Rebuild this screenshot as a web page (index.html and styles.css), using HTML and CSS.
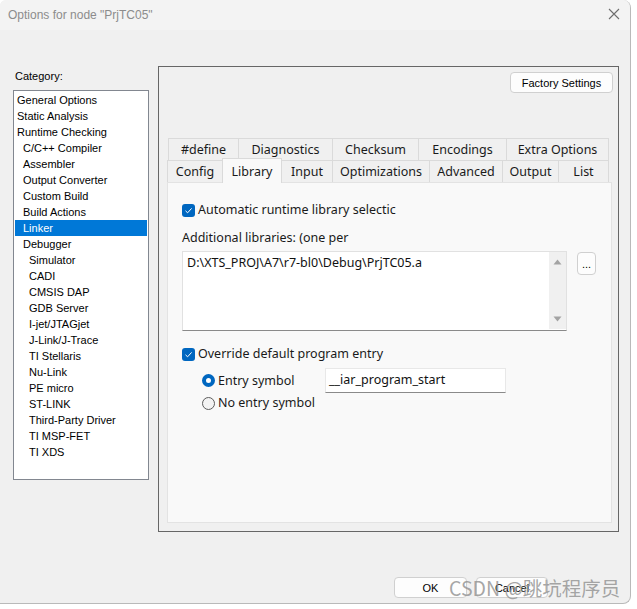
FILE: index.html
```html
<!DOCTYPE html>
<html>
<head>
<meta charset="utf-8">
<title>Options for node "PrjTC05"</title>
<link rel="stylesheet" href="styles.css">
</head>
<body>
<div class="window">
  <div class="titlebar">
    <span class="title">Options for node "PrjTC05"</span>
    <svg class="close" width="12" height="12" viewBox="0 0 12 12"><path d="M1 1L11 11M11 1L1 11" stroke="#6e6e6e" stroke-width="1.1" fill="none"/></svg>
  </div>
  <div class="main">
    <div class="category">
      <div class="cat-label">Category:</div>
      <ul class="cat-list">
        <li class="l0">General Options</li>
        <li class="l0">Static Analysis</li>
        <li class="l0">Runtime Checking</li>
        <li class="l1">C/C++ Compiler</li>
        <li class="l1">Assembler</li>
        <li class="l1">Output Converter</li>
        <li class="l1">Custom Build</li>
        <li class="l1">Build Actions</li>
        <li class="l1 selected">Linker</li>
        <li class="l1">Debugger</li>
        <li class="l2">Simulator</li>
        <li class="l2">CADI</li>
        <li class="l2">CMSIS DAP</li>
        <li class="l2">GDB Server</li>
        <li class="l2">I-jet/JTAGjet</li>
        <li class="l2">J-Link/J-Trace</li>
        <li class="l2">TI Stellaris</li>
        <li class="l2">Nu-Link</li>
        <li class="l2">PE micro</li>
        <li class="l2">ST-LINK</li>
        <li class="l2">Third-Party Driver</li>
        <li class="l2">TI MSP-FET</li>
        <li class="l2">TI XDS</li>
      </ul>
    </div>
    <div class="frame">
      <div class="frame-head"><button class="btn factory">Factory Settings</button></div>
      <div class="tabs">
        <div class="tabrow back">
          <div class="tab t-define">#define</div>
          <div class="tab t-diag">Diagnostics</div>
          <div class="tab t-check">Checksum</div>
          <div class="tab t-enc">Encodings</div>
          <div class="tab t-extra">Extra Options</div>
        </div>
        <div class="tabrow front">
          <div class="tab t-config">Config</div>
          <div class="tab t-lib active">Library</div>
          <div class="tab t-input">Input</div>
          <div class="tab t-opt">Optimizations</div>
          <div class="tab t-adv">Advanced</div>
          <div class="tab t-out">Output</div>
          <div class="tab t-list">List</div>
        </div>
      </div>
      <div class="page">
        <div class="row check-row">
          <span class="checkbox checked"><svg width="13" height="13" viewBox="0 0 13 13"><path d="M3.5 6.8L5.6 8.8L9.6 4.4" stroke="#fff" stroke-width="1" fill="none"/></svg></span>
          <span class="label">Automatic runtime library selectic</span>
        </div>
        <div class="row text-row">
          <span class="label">Additional libraries: (one per</span>
        </div>
        <div class="lib-row">
          <div class="textarea">
            <div class="ta-text">D:\XTS_PROJ\A7\r7-bl0\Debug\PrjTC05.a</div>
            <div class="scrollbar">
              <svg width="17" height="77" viewBox="0 0 17 77"><path d="M4.5 12.5L8.5 7.5L12.5 12.5Z" fill="#a3a3a3"/><path d="M4.5 64.5L8.5 69.5L12.5 64.5Z" fill="#a3a3a3"/></svg>
            </div>
          </div>
          <button class="btn dots">...</button>
        </div>
        <div class="row check-row cb2">
          <span class="checkbox checked"><svg width="13" height="13" viewBox="0 0 13 13"><path d="M3.5 6.8L5.6 8.8L9.6 4.4" stroke="#fff" stroke-width="1" fill="none"/></svg></span>
          <span class="label">Override default program entry</span>
        </div>
        <div class="radio-row r1">
          <span class="radio-label"><span class="radio on"></span><span class="label">Entry symbol</span></span>
          <div class="field">__iar_program_start</div>
        </div>
        <div class="radio-row r2">
          <span class="radio-label"><span class="radio"></span><span class="label">No entry symbol</span></span>
        </div>
      </div>
    </div>
  </div>
  <div class="footer">
    <button class="btn dlg ok">OK</button>
    <button class="btn dlg cancel">Cancel</button>
  </div>
  <div class="watermark">CSDN @跳坑程序员</div>
</div>
</body>
</html>
```
FILE: styles.css
```css
* { box-sizing: border-box; }
html, body { margin: 0; padding: 0; }
body {
  width: 637px;
  height: 609px;
  overflow: hidden;
  background: #ffffff;
  font-family: "Liberation Sans", Arial, sans-serif;
}
.window {
  position: relative;
  width: 631px;
  height: 604px;
  background: #f0f0f0;
  border-right: 1px solid #b9b9b9;
  border-bottom: 1px solid #b9b9b9;
  border-radius: 6px 8px 8px 0;
  overflow: hidden;
}
.titlebar {
  height: 30px;
  background: #f3f3f3;
  display: flex;
  align-items: center;
  justify-content: space-between;
  padding: 0 10px 0 8px;
}
.title {
  font-size: 12px;
  color: #8c8c8c;
  font-family: "Liberation Sans", Arial, sans-serif;
}
.close { margin-top: -2px; }

.main {
  display: flex;
  padding: 36px 0 0 13px;
}
.category { width: 136px; }
.cat-label {
  height: 20px;
  line-height: 20px;
  margin-bottom: 4px;
  font-size: 11px;
  padding-left: 2px;
  color: #000;
}
.cat-list {
  list-style: none;
  margin: 0;
  padding: 1px;
  width: 136px;
  height: 390px;
  background: #fff;
  border: 1px solid #828790;
}
.cat-list li {
  height: 16px;
  line-height: 16px;
  font-size: 11px;
  color: #000;
  white-space: nowrap;
}
.cat-list .l0 { padding-left: 2px; }
.cat-list .l1 { padding-left: 8px; }
.cat-list .l2 { padding-left: 14px; }
.cat-list .selected { background: #0078d7; color: #fff; }

.frame {
  margin-left: 9px;
  width: 461px;
  height: 466px;
  border: 1px solid #666666;
  padding: 5px 6px 8px 8px;
  display: flex;
  flex-direction: column;
}
.frame-head {
  display: flex;
  justify-content: flex-end;
  margin-right: -1px;
}
.btn {
  background: #fdfdfd;
  border: 1px solid #d0d0d0;
  border-radius: 4px;
  color: #000;
  padding: 0;
  font-family: "Liberation Sans", Arial, sans-serif;
}
.factory {
  width: 103px;
  height: 21px;
  font-size: 11px;
}
.tabs {
  margin-top: 45px;
  font-family: "Noto Sans", "Noto Sans CJK SC", sans-serif;
  font-size: 12.5px;
  color: #1a1a1a;
}
.tabrow {
  display: flex;
  height: 22px;
}
.tabrow.back { margin-left: 1px; }
.tab {
  height: 22px;
  line-height: 21px;
  text-align: center;
  border: 1px solid #dadada;
  border-bottom: none;
  background: #f0f0f0;
  margin-left: -1px;
  white-space: nowrap;
}
.tabrow .tab:first-child { margin-left: 0; }
.tab.active {
  position: relative;
  z-index: 2;
  height: 25px;
  margin-top: -2px;
  line-height: 25px;
  background: #f9f9f9;
}
.t-define { width: 71px; }
.t-diag { width: 95px; }
.t-check { width: 87px; }
.t-enc { width: 89px; }
.t-extra { width: 103px; }
.t-config { width: 56px; }
.t-lib { width: 60px; }
.t-input { width: 52px; }
.t-opt { width: 98px; }
.t-adv { width: 74px; }
.t-out { width: 57px; }
.t-list { width: 51px; }

.page {
  width: 445px;
  height: 341px;
  background: #f9f9f9;
  border: 1px solid #e3e3e3;
  padding: 19px 14px 0 14px;
  display: flex;
  flex-direction: column;
  font-family: "Noto Sans", "Noto Sans CJK SC", sans-serif;
  font-size: 12.5px;
  color: #1a1a1a;
}
.row {
  display: flex;
  align-items: center;
  height: 16px;
}
.label { white-space: nowrap; line-height: 16px; }
.checkbox {
  width: 13px;
  height: 13px;
  border-radius: 3px;
  background: #0067c0;
  margin-right: 3px;
  display: flex;
  flex: none;
}
.text-row { margin-top: 12px; }
.lib-row {
  display: flex;
  align-items: flex-start;
  margin-top: 5px;
}
.textarea {
  width: 385px;
  height: 80px;
  background: #fff;
  border: 1px solid #e1e1e1;
  border-bottom-color: #8a8a8a;
  display: flex;
}
.ta-text {
  flex: 1;
  padding: 2px 0 0 4px;
  line-height: 17px;
  color: #111;
}
.scrollbar {
  width: 17px;
  height: 77px;
  background: #f0f0f0;
}
.scrollbar svg { display: block; }
.dots {
  width: 19px;
  height: 23px;
  margin-left: 10px;
  margin-top: 1px;
  font-size: 11px;
  line-height: 18px;
}
.cb2 { margin-top: 15px; }
.radio-row {
  display: flex;
  align-items: center;
  padding-left: 20px;
}
.r1 { margin-top: 6px; height: 25px; }
.r2 { margin-top: 2px; height: 16px; }
.radio-label {
  display: flex;
  align-items: center;
  width: 123px;
}
.radio {
  width: 13px;
  height: 13px;
  border-radius: 50%;
  border: 1px solid #5c5c5c;
  background: #f3f3f3;
  margin-right: 3px;
  flex: none;
}
.radio.on {
  border: 4px solid #0067c0;
  background: #fff;
}
.field {
  width: 181px;
  height: 25px;
  background: #fff;
  border: 1px solid #e8e8e8;
  border-bottom-color: #8a8a8a;
  padding-left: 3px;
  line-height: 22px;
  color: #111;
}

.footer {
  display: flex;
  justify-content: flex-end;
  gap: 9px;
  margin-top: 45px;
  padding-right: 82px;
}
.dlg {
  height: 21px;
  font-size: 11px;
}
.ok { width: 73px; }
.cancel { width: 72px; }
.watermark {
  position: absolute;
  left: 449px;
  top: 575px;
  font-family: "Noto Sans CJK SC", "Noto Sans", sans-serif;
  font-size: 19.5px;
  line-height: 26px;
  color: rgba(150, 150, 150, 0.85);
  white-space: nowrap;
}
```
